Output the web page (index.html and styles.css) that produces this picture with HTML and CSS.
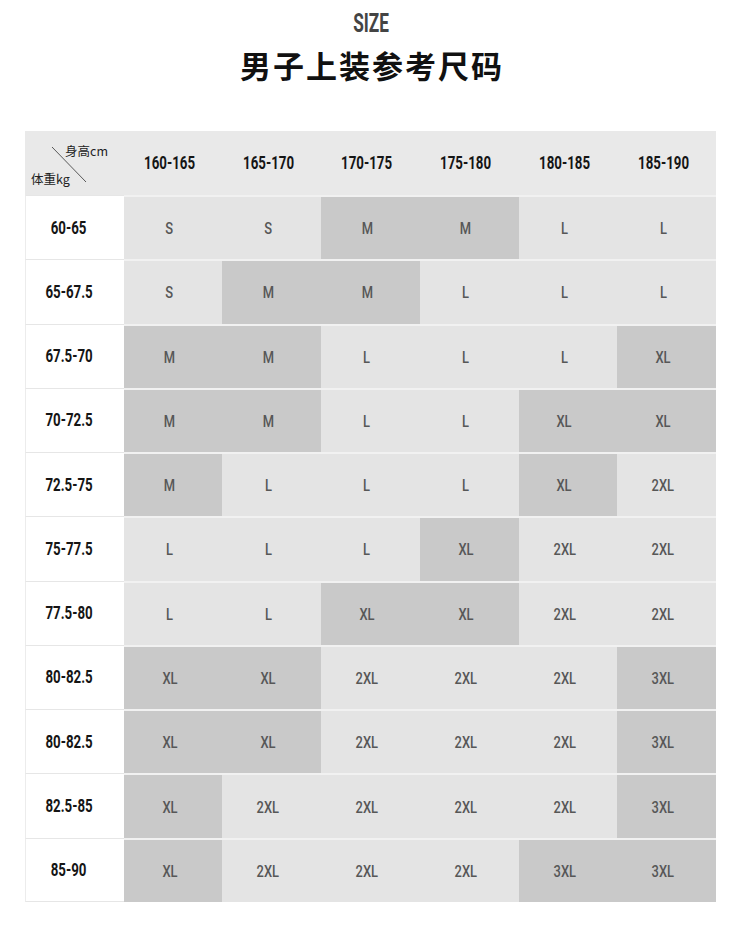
FILE: index.html
```html
<!DOCTYPE html>
<html lang="zh">
<head>
<meta charset="utf-8">
<title>男子上装参考尺码</title>
<link rel="stylesheet" href="styles.css">
</head>
<body>
<header class="heading">
  <div class="size-label"><span class="cond">SIZE</span></div>
  <h1 class="title">男子上装参考尺码</h1>
</header>
<main class="chart">
  <div class="corner">
    <svg class="diag" width="100" height="64" viewBox="0 0 100 64"><line x1="27" y1="16" x2="61" y2="51" stroke="#333" stroke-width="0.8"/></svg>
    <span class="corner-h">身高cm</span>
    <span class="corner-w">体重kg</span>
  </div>
  <div class="hd"><span class="cond">160-165</span></div>
  <div class="hd"><span class="cond">165-170</span></div>
  <div class="hd"><span class="cond">170-175</span></div>
  <div class="hd"><span class="cond">175-180</span></div>
  <div class="hd"><span class="cond">180-185</span></div>
  <div class="hd"><span class="cond">185-190</span></div>

  <div class="rl"><span class="cond">60-65</span></div>
  <div class="c"><span class="cond">S</span></div>
  <div class="c"><span class="cond">S</span></div>
  <div class="c d"><span class="cond">M</span></div>
  <div class="c d"><span class="cond">M</span></div>
  <div class="c"><span class="cond">L</span></div>
  <div class="c"><span class="cond">L</span></div>

  <div class="rl"><span class="cond">65-67.5</span></div>
  <div class="c"><span class="cond">S</span></div>
  <div class="c d"><span class="cond">M</span></div>
  <div class="c d"><span class="cond">M</span></div>
  <div class="c"><span class="cond">L</span></div>
  <div class="c"><span class="cond">L</span></div>
  <div class="c"><span class="cond">L</span></div>

  <div class="rl"><span class="cond">67.5-70</span></div>
  <div class="c d"><span class="cond">M</span></div>
  <div class="c d"><span class="cond">M</span></div>
  <div class="c"><span class="cond">L</span></div>
  <div class="c"><span class="cond">L</span></div>
  <div class="c"><span class="cond">L</span></div>
  <div class="c d"><span class="cond">XL</span></div>

  <div class="rl"><span class="cond">70-72.5</span></div>
  <div class="c d"><span class="cond">M</span></div>
  <div class="c d"><span class="cond">M</span></div>
  <div class="c"><span class="cond">L</span></div>
  <div class="c"><span class="cond">L</span></div>
  <div class="c d"><span class="cond">XL</span></div>
  <div class="c d"><span class="cond">XL</span></div>

  <div class="rl"><span class="cond">72.5-75</span></div>
  <div class="c d"><span class="cond">M</span></div>
  <div class="c"><span class="cond">L</span></div>
  <div class="c"><span class="cond">L</span></div>
  <div class="c"><span class="cond">L</span></div>
  <div class="c d"><span class="cond">XL</span></div>
  <div class="c"><span class="cond">2XL</span></div>

  <div class="rl"><span class="cond">75-77.5</span></div>
  <div class="c"><span class="cond">L</span></div>
  <div class="c"><span class="cond">L</span></div>
  <div class="c"><span class="cond">L</span></div>
  <div class="c d"><span class="cond">XL</span></div>
  <div class="c"><span class="cond">2XL</span></div>
  <div class="c"><span class="cond">2XL</span></div>

  <div class="rl"><span class="cond">77.5-80</span></div>
  <div class="c"><span class="cond">L</span></div>
  <div class="c"><span class="cond">L</span></div>
  <div class="c d"><span class="cond">XL</span></div>
  <div class="c d"><span class="cond">XL</span></div>
  <div class="c"><span class="cond">2XL</span></div>
  <div class="c"><span class="cond">2XL</span></div>

  <div class="rl"><span class="cond">80-82.5</span></div>
  <div class="c d"><span class="cond">XL</span></div>
  <div class="c d"><span class="cond">XL</span></div>
  <div class="c"><span class="cond">2XL</span></div>
  <div class="c"><span class="cond">2XL</span></div>
  <div class="c"><span class="cond">2XL</span></div>
  <div class="c d"><span class="cond">3XL</span></div>

  <div class="rl"><span class="cond">80-82.5</span></div>
  <div class="c d"><span class="cond">XL</span></div>
  <div class="c d"><span class="cond">XL</span></div>
  <div class="c"><span class="cond">2XL</span></div>
  <div class="c"><span class="cond">2XL</span></div>
  <div class="c"><span class="cond">2XL</span></div>
  <div class="c d"><span class="cond">3XL</span></div>

  <div class="rl"><span class="cond">82.5-85</span></div>
  <div class="c d"><span class="cond">XL</span></div>
  <div class="c"><span class="cond">2XL</span></div>
  <div class="c"><span class="cond">2XL</span></div>
  <div class="c"><span class="cond">2XL</span></div>
  <div class="c"><span class="cond">2XL</span></div>
  <div class="c d"><span class="cond">3XL</span></div>

  <div class="rl last"><span class="cond">85-90</span></div>
  <div class="c d"><span class="cond">XL</span></div>
  <div class="c"><span class="cond">2XL</span></div>
  <div class="c"><span class="cond">2XL</span></div>
  <div class="c"><span class="cond">2XL</span></div>
  <div class="c d"><span class="cond">3XL</span></div>
  <div class="c d"><span class="cond">3XL</span></div>
</main>
</body>
</html>
```
FILE: styles.css
```css
html, body {
  margin: 0;
  padding: 0;
  background: #ffffff;
}
body {
  font-family: Roboto, "Noto Sans CJK SC", sans-serif;
  color: #1a1a1a;
}
.heading {
  display: flex;
  flex-direction: column;
  align-items: center;
  padding-top: 7px;
}
.cond {
  display: inline-block;
  transform: scaleX(0.76);
  transform-origin: center;
  white-space: nowrap;
}
.size-label {
  font-family: Roboto, sans-serif;
  font-weight: 700;
  font-size: 26px;
  line-height: 32px;
  color: #444;
  transform: translateX(-4px);
}
.size-label .cond {
  transform: scaleX(0.66);
}
.title {
  margin: 6px 0 0 0;
  font-family: "Noto Sans CJK SC", sans-serif;
  font-weight: 700;
  font-size: 31px;
  line-height: 40px;
  letter-spacing: 2px;
  color: #111;
  transform: translateX(-3px);
}
.chart {
  display: grid;
  grid-template-columns: repeat(7, 1fr);
  grid-template-rows: 64px repeat(11, 64.27px);
  width: 691px;
  margin: 46px 0 0 25px;
}
.corner {
  position: relative;
  background: #e9e9e9;
  font-family: "Noto Sans CJK SC", sans-serif;
  font-size: 12.5px;
  color: #222;
}
.diag {
  position: absolute;
  left: 0;
  top: 0;
}
.corner-h {
  position: absolute;
  left: 40px;
  top: 10px;
}
.corner-w {
  position: absolute;
  left: 6px;
  top: 38px;
}
.hd {
  background: #e9e9e9;
  display: flex;
  align-items: center;
  justify-content: center;
  padding-right: 7px;
  font-weight: 700;
  font-size: 17.5px;
  color: #151515;
}
.rl {
  display: flex;
  align-items: center;
  justify-content: center;
  padding-right: 12px;
  background: #fff;
  border-left: 1px solid #ececec;
  border-top: 1px solid #e6e6e6;
  font-weight: 700;
  font-size: 17.5px;
  color: #151515;
}
.rl.last {
  border-bottom: 1px solid #e6e6e6;
}
.c {
  display: flex;
  align-items: center;
  justify-content: center;
  padding-right: 7px;
  background: #e4e4e4;
  border-top: 2px solid #f1f1f1;
  font-weight: 500;
  font-size: 17px;
  color: #575757;
}
.c.d {
  background: #c9c9c9;
}
```
